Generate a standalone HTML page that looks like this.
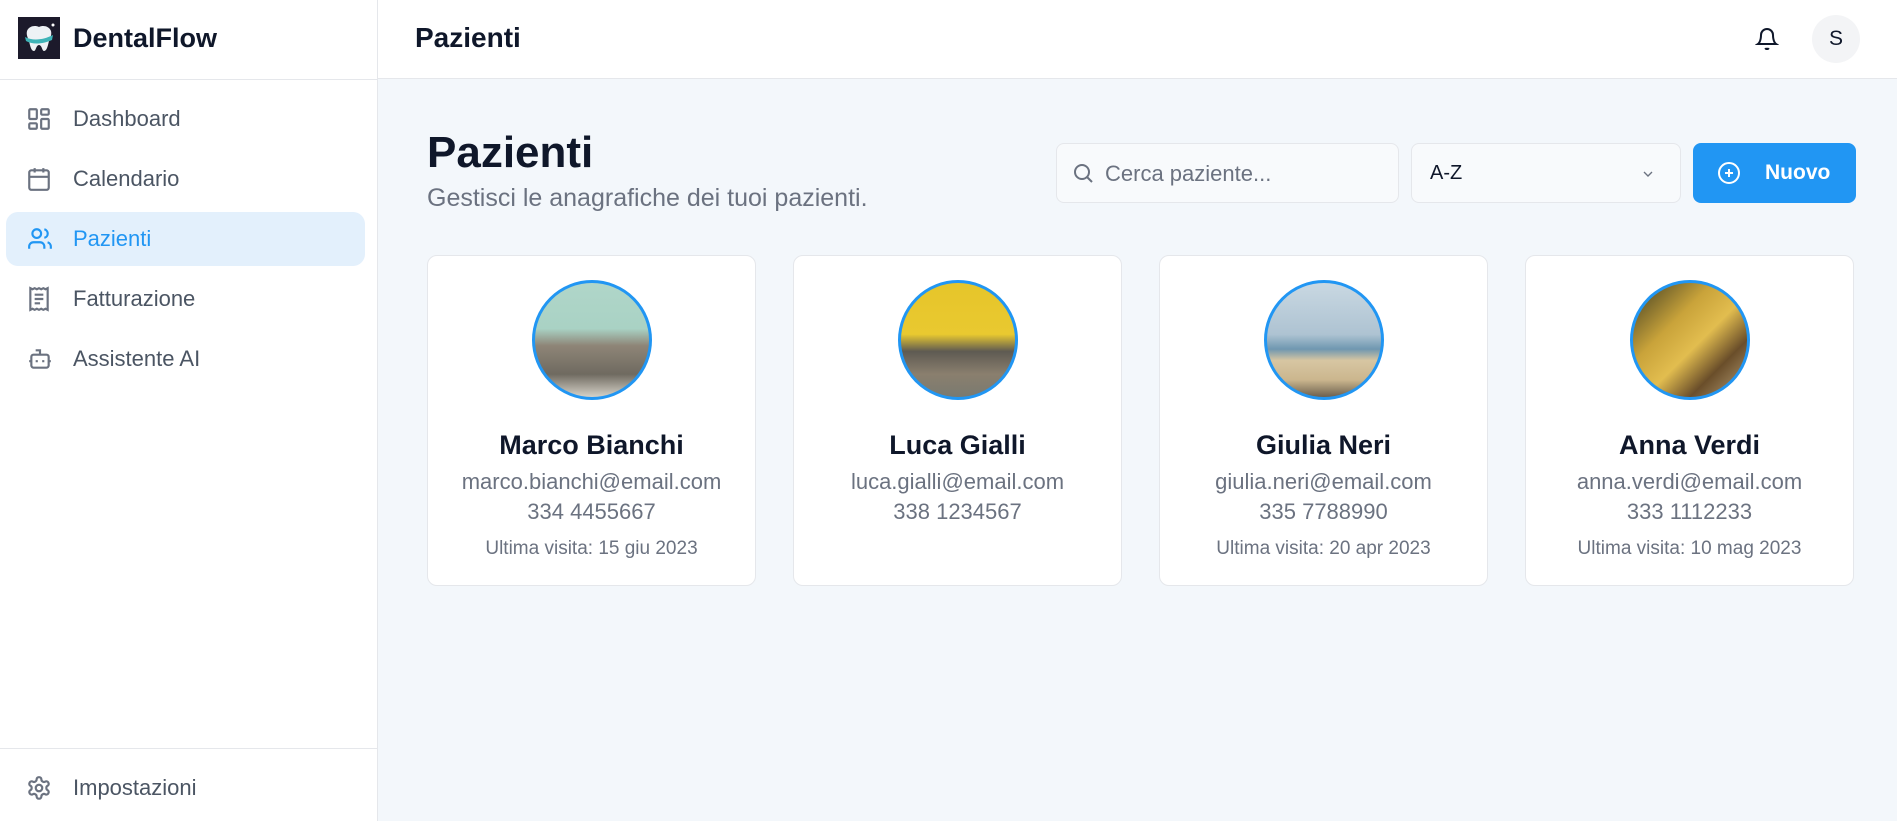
<!DOCTYPE html>
<html><head><meta charset="utf-8"><style>
*{box-sizing:border-box;margin:0;padding:0}
body{width:1897px;height:821px;overflow:hidden;font-family:"Liberation Sans",sans-serif;background:#f3f7fb;position:relative}
.sb{position:absolute;left:0;top:0;width:378px;height:821px;background:#fff;border-right:1px solid #e5e7eb}
.logo{position:absolute;left:18px;top:17px;width:42px;height:42px;background:#1c1a2b}
.brand{position:absolute;left:73px;top:23px;font-size:27px;font-weight:bold;color:#0f172a}
.sep{position:absolute;left:0;width:378px;height:1px;background:#e5e7eb}
.nav{position:absolute;left:6px;width:359px;height:54px;border-radius:12px;font-size:22px;color:#4b5563}
.nav span{position:absolute;left:67px;top:14px}
.nav svg{position:absolute;left:20px;top:14px}
.act{background:#e3f0fc;color:#2196f3}
.hdr{position:absolute;left:378px;top:0;right:0;height:79px;background:#fff;border-bottom:1px solid #e5e7eb}
.card{position:absolute;top:255px;width:329px;height:331px;background:#fff;border:1px solid #e5e7eb;border-radius:10px;text-align:center}
.av{width:120px;height:120px;border-radius:50%;border:3px solid #2196f3;margin:24px auto 0;overflow:hidden}
.nm{margin-top:30px;font-size:27px;font-weight:bold;color:#0f172a;line-height:30px}
.em{font-size:22px;color:#6b7280;line-height:30px;margin-top:7px}
.lv{font-size:19px;color:#6b7280;margin-top:11px}
</style></head><body>
<div class="sb">
<div class="logo"><svg width="42" height="42" viewBox="0 0 42 42"><path d="M9 14c2-5 8-6 12-4 4-2 10-1 12 4 1 4-1 7-2 10-1 4-2 10-5 10-2 0-2-6-5-6s-3 6-5 6c-3 0-4-6-5-10-1-3-3-6-2-10z" fill="#eef2f5"/><path d="M7 20c8 4 18 3 28-2l-1 5c-9 4-19 5-26 1z" fill="#3fb4b8"/><circle cx="35" cy="8" r="1.5" fill="#fff"/></svg></div>
<div class="brand">DentalFlow</div>
<div class="sep" style="top:79px"></div>
<div class="nav" style="top:92px"><svg width="26" height="26" viewBox="0 0 24 24" fill="none" stroke="#6b7280" stroke-width="2"><rect x="3" y="3" width="7" height="9" rx="1"/><rect x="14" y="3" width="7" height="5" rx="1"/><rect x="14" y="12" width="7" height="9" rx="1"/><rect x="3" y="16" width="7" height="5" rx="1"/></svg><span>Dashboard</span></div>
<div class="nav" style="top:152px"><svg width="26" height="26" viewBox="0 0 24 24" fill="none" stroke="#6b7280" stroke-width="2"><rect x="3" y="4" width="18" height="18" rx="2"/><path d="M16 2v4M8 2v4M3 10h18"/></svg><span>Calendario</span></div>
<div class="nav act" style="top:212px"><svg width="28" height="26" viewBox="0 0 24 24" fill="none" stroke="#2196f3" stroke-width="2"><path d="M16 21v-2a4 4 0 0 0-4-4H6a4 4 0 0 0-4 4v2"/><circle cx="9" cy="7" r="4"/><path d="M22 21v-2a4 4 0 0 0-3-3.9M16 3.1a4 4 0 0 1 0 7.8"/></svg><span>Pazienti</span></div>
<div class="nav" style="top:272px"><svg width="26" height="26" viewBox="0 0 24 24" fill="none" stroke="#6b7280" stroke-width="2"><path d="M4 2v20l2-1 2 1 2-1 2 1 2-1 2 1 2-1 2 1V2l-2 1-2-1-2 1-2-1-2 1-2-1-2 1z"/><path d="M8 8h8M8 12h8M8 16h5"/></svg><span>Fatturazione</span></div>
<div class="nav" style="top:332px"><svg width="28" height="26" viewBox="0 0 24 24" fill="none" stroke="#6b7280" stroke-width="2"><path d="M12 8V4H8"/><rect x="4" y="8" width="16" height="12" rx="2"/><path d="M2 14h2M20 14h2M15 13v2M9 13v2"/></svg><span>Assistente AI</span></div>
<div class="sep" style="top:748px"></div>
<div class="nav" style="top:761px"><svg width="26" height="26" viewBox="0 0 24 24" fill="none" stroke="#6b7280" stroke-width="2"><path d="M12.2 2h-.4a2 2 0 0 0-2 2v.2a2 2 0 0 1-1 1.7l-.4.3a2 2 0 0 1-2 0l-.2-.1a2 2 0 0 0-2.7.7l-.2.4a2 2 0 0 0 .7 2.7l.2.1a2 2 0 0 1 1 1.7v.5a2 2 0 0 1-1 1.7l-.2.1a2 2 0 0 0-.7 2.7l.2.4a2 2 0 0 0 2.7.7l.2-.1a2 2 0 0 1 2 0l.4.3a2 2 0 0 1 1 1.7v.2a2 2 0 0 0 2 2h.4a2 2 0 0 0 2-2v-.2a2 2 0 0 1 1-1.7l.4-.3a2 2 0 0 1 2 0l.2.1a2 2 0 0 0 2.7-.7l.2-.4a2 2 0 0 0-.7-2.7l-.2-.1a2 2 0 0 1-1-1.7v-.5a2 2 0 0 1 1-1.7l.2-.1a2 2 0 0 0 .7-2.7l-.2-.4a2 2 0 0 0-2.7-.7l-.2.1a2 2 0 0 1-2 0l-.4-.3a2 2 0 0 1-1-1.7V4a2 2 0 0 0-2-2z"/><circle cx="12" cy="12" r="3"/></svg><span>Impostazioni</span></div>
</div>
<div class="hdr">
<div style="position:absolute;left:37px;top:22px;font-size:28px;font-weight:bold;color:#0f172a">Pazienti</div>
<svg style="position:absolute;left:1377px;top:27px" width="24" height="24" viewBox="0 0 24 24" fill="none" stroke="#0f172a" stroke-width="2"><path d="M6 8a6 6 0 0 1 12 0c0 7 3 9 3 9H3s3-2 3-9M10.3 21a1.9 1.9 0 0 0 3.4 0"/></svg>
<div style="position:absolute;left:1434px;top:15px;width:48px;height:48px;border-radius:50%;background:#f3f4f6;text-align:center;line-height:48px;font-size:21px;color:#0f172a">S</div>
</div>
<div style="position:absolute;left:427px;top:128px;font-size:44px;font-weight:bold;color:#0f172a">Pazienti</div>
<div style="position:absolute;left:427px;top:184px;font-size:25px;color:#6b7280">Gestisci le anagrafiche dei tuoi pazienti.</div>
<div style="position:absolute;left:1056px;top:143px;width:343px;height:60px;background:#f8fafc;border:1px solid #e5e7eb;border-radius:8px">
<svg style="position:absolute;left:14px;top:17px" width="24" height="24" viewBox="0 0 24 24" fill="none" stroke="#6b7280" stroke-width="2"><circle cx="11" cy="11" r="7"/><path d="M21 21l-5-5"/></svg>
<span style="position:absolute;left:48px;top:17px;font-size:22px;color:#6b7280">Cerca paziente...</span></div>
<div style="position:absolute;left:1411px;top:143px;width:270px;height:60px;background:#f8fafc;border:1px solid #e5e7eb;border-radius:8px">
<span style="position:absolute;left:18px;top:18px;font-size:20px;color:#0f172a">A-Z</span>
<svg style="position:absolute;left:228px;top:22px" width="16" height="16" viewBox="0 0 24 24" fill="none" stroke="#6b7280" stroke-width="2"><path d="M6 9l6 6 6-6"/></svg></div>
<div style="position:absolute;left:1693px;top:143px;width:163px;height:60px;background:#2196f3;border-radius:8px;color:#fff">
<svg style="position:absolute;left:24px;top:18px" width="24" height="24" viewBox="0 0 24 24" fill="none" stroke="#fff" stroke-width="2"><circle cx="12" cy="12" r="10"/><path d="M12 8v8M8 12h8"/></svg>
<span style="position:absolute;left:72px;top:18px;font-size:21px;font-weight:bold">Nuovo</span></div>

<div class="card" style="left:427px"><div class="av" style="background:linear-gradient(180deg,#b0d6c9 0%,#a9d2c4 40%,#8e8577 55%,#6f6a60 80%,#d6d2c8 100%)"></div><div class="nm">Marco Bianchi</div><div class="em">marco.bianchi@email.com<br>334 4455667</div><div class="lv">Ultima visita: 15 giu 2023</div></div>
<div class="card" style="left:793px"><div class="av" style="background:linear-gradient(180deg,#e6c52a 0%,#e9c930 45%,#5e5a52 60%,#8a7f6e 80%,#7a7a70 100%)"></div><div class="nm">Luca Gialli</div><div class="em">luca.gialli@email.com<br>338 1234567</div></div>
<div class="card" style="left:1159px"><div class="av" style="background:linear-gradient(180deg,#c9d8e2 0%,#aec3d2 45%,#6f97b0 58%,#d7c6a2 68%,#cbb68e 85%,#6c604e 100%)"></div><div class="nm">Giulia Neri</div><div class="em">giulia.neri@email.com<br>335 7788990</div><div class="lv">Ultima visita: 20 apr 2023</div></div>
<div class="card" style="left:1525px"><div class="av" style="background:linear-gradient(135deg,#3c3a22 0%,#c9a33a 35%,#e2bd4f 55%,#6a4e2a 75%,#b9a27a 100%)"></div><div class="nm">Anna Verdi</div><div class="em">anna.verdi@email.com<br>333 1112233</div><div class="lv">Ultima visita: 10 mag 2023</div></div>
</body></html>
